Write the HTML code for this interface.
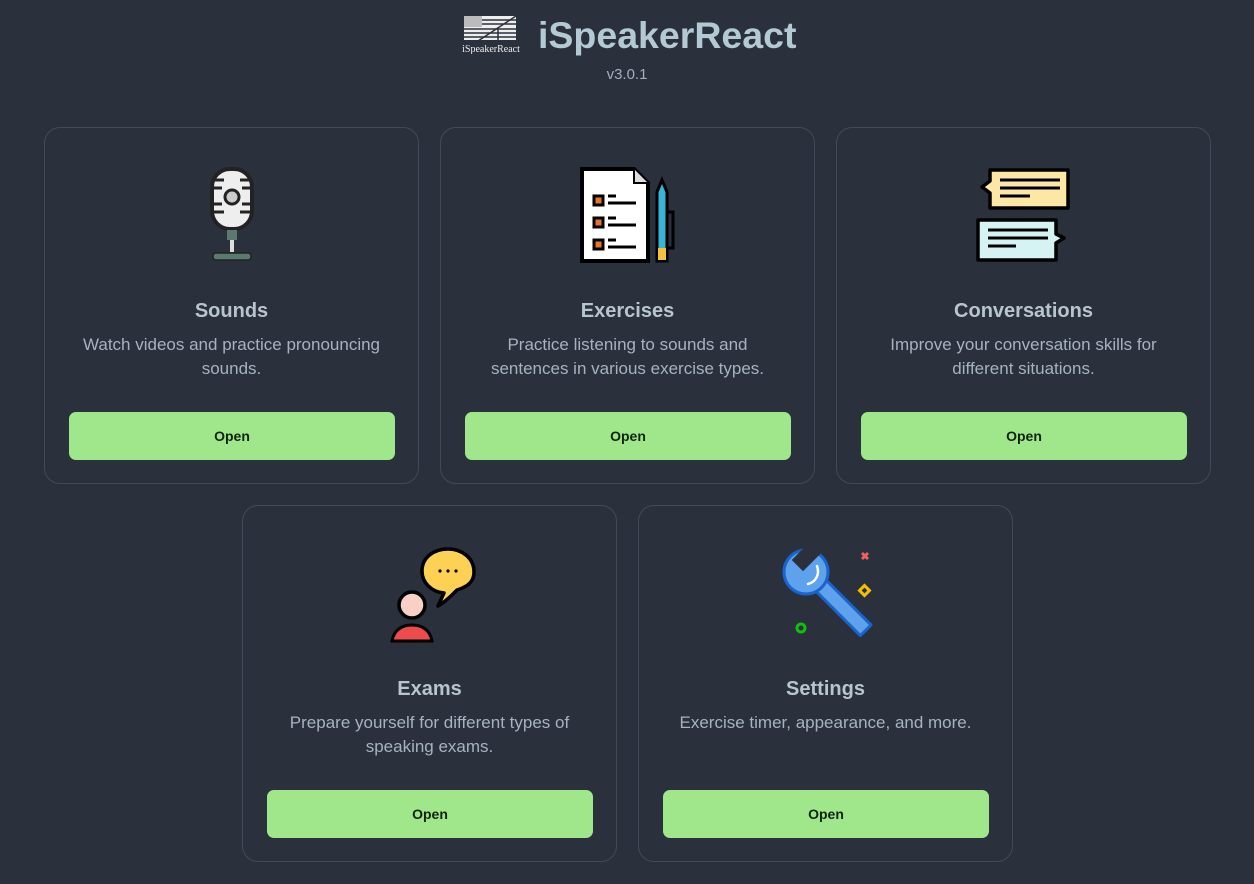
<!DOCTYPE html>
<html><head><meta charset="utf-8"><style>
*{box-sizing:border-box;margin:0;padding:0}
body{width:1254px;height:884px;background:#2a303c;font-family:"Liberation Sans","DejaVu Sans",sans-serif;color:#a6adbb;overflow:hidden;position:relative}
.logo{position:absolute;left:458px;top:14px;width:66px;height:40px}
.brand{position:absolute;left:538px;top:14px;font-size:37.5px;font-weight:bold;color:#b3c9d3}
.ver{position:absolute;left:0;width:1254px;top:66px;text-align:center;font-size:15px;color:#a6adbb}
.card{position:absolute;width:375px;height:357px;border:1px solid #434a57;border-radius:16px;text-align:center}
.card svg.ic{position:absolute;left:139px;top:38px;width:96px;height:100px}
.card h2{position:absolute;top:172px;left:0;width:100%;font-size:20px;font-weight:bold;color:#b8c5cf}
.card p{position:absolute;top:205px;left:30px;width:313px;font-size:17px;line-height:24px;color:#a6b3bf}
.btn{position:absolute;left:24px;top:284px;width:326px;height:48px;background:#a0e78c;border-radius:7px;color:#12230e;font-size:14px;font-weight:bold;line-height:48px}
</style></head><body>
<svg class="logo" viewBox="0 0 66 40">
<rect x="6" y="2" width="52" height="24" fill="#eee"/>
<rect x="6" y="2" width="18" height="11" fill="#bbb"/>
<g stroke="#2a303c" stroke-width="1.5"><line x1="24" y1="6" x2="58" y2="6"/><line x1="24" y1="10" x2="58" y2="10"/><line x1="6" y1="15" x2="58" y2="15"/><line x1="6" y1="19" x2="58" y2="19"/><line x1="6" y1="23" x2="58" y2="23"/><line x1="20" y1="27" x2="58" y2="2"/><line x1="40" y1="14" x2="40" y2="27"/></g>
<text x="33" y="38" font-family="Liberation Serif,serif" font-size="10" fill="#eee" text-anchor="middle">iSpeakerReact</text>
</svg>
<div class="brand">iSpeakerReact</div>
<div class="ver">v3.0.1</div>

<div class="card" style="left:44px;top:127px">
<svg class="ic" viewBox="0 0 96 100"><rect x="28" y="3" width="40" height="60" rx="18" fill="#eee" stroke="#222" stroke-width="4"/><g stroke="#222" stroke-width="3"><line x1="30" y1="14" x2="40" y2="14"/><line x1="56" y1="14" x2="66" y2="14"/><line x1="30" y1="22" x2="38" y2="22"/><line x1="58" y1="22" x2="66" y2="22"/><line x1="30" y1="38" x2="38" y2="38"/><line x1="58" y1="38" x2="66" y2="38"/><line x1="30" y1="46" x2="40" y2="46"/><line x1="56" y1="46" x2="66" y2="46"/></g><circle cx="48" cy="31" r="7" fill="#ccc" stroke="#222" stroke-width="3"/><rect x="43" y="64" width="10" height="10" fill="#5a7a70"/><rect x="46" y="74" width="4" height="12" fill="#ddd"/><rect x="29" y="87" width="38" height="7" rx="3" fill="#5a7a70" stroke="#222" stroke-width="1.5"/></svg>
<h2>Sounds</h2><p>Watch videos and practice pronouncing sounds.</p><div class="btn">Open</div></div>

<div class="card" style="left:440px;top:127px">
<svg class="ic" viewBox="0 0 96 100"><path d="M2 3H54L68 17V95H2Z" fill="#fff" stroke="#000" stroke-width="4"/><path d="M54 3V17H68" fill="#ddd" stroke="#000" stroke-width="2"/><g fill="#e8742a" stroke="#000" stroke-width="3"><rect x="14" y="30" width="9" height="9"/><rect x="14" y="52" width="9" height="9"/><rect x="14" y="74" width="9" height="9"/></g><g stroke="#000" stroke-width="3"><line x1="28" y1="30" x2="36" y2="30"/><line x1="28" y1="37" x2="56" y2="37"/><line x1="28" y1="52" x2="36" y2="52"/><line x1="28" y1="59" x2="56" y2="59"/><line x1="28" y1="74" x2="36" y2="74"/><line x1="28" y1="81" x2="56" y2="81"/></g><path d="M77 26L82 14L87 26V95H77Z" fill="#3ab4d6" stroke="#000" stroke-width="3"/><rect x="78" y="82" width="8" height="12" fill="#f2c23d"/><path d="M88 46H93V82H88" fill="none" stroke="#000" stroke-width="3"/></svg>
<h2>Exercises</h2><p>Practice listening to sounds and sentences in various exercise types.</p><div class="btn">Open</div></div>

<div class="card" style="left:836px;top:127px">
<svg class="ic" viewBox="0 0 96 100"><path d="M14 4H92V42H14V27L6 21L14 15Z" fill="#fde7a4" stroke="#000" stroke-width="3.5" stroke-linejoin="round"/><g stroke="#000" stroke-width="3"><line x1="24" y1="14" x2="84" y2="14"/><line x1="24" y1="22" x2="84" y2="22"/><line x1="24" y1="30" x2="54" y2="30"/></g><path d="M2 54H80V68L88 72L80 77V94H2Z" fill="#d6f3f3" stroke="#000" stroke-width="3.5" stroke-linejoin="round"/><g stroke="#000" stroke-width="3"><line x1="12" y1="64" x2="72" y2="64"/><line x1="12" y1="72" x2="72" y2="72"/><line x1="12" y1="80" x2="40" y2="80"/></g></svg>
<h2>Conversations</h2><p>Improve your conversation skills for different situations.</p><div class="btn">Open</div></div>

<div class="card" style="left:242px;top:505px">
<svg class="ic" viewBox="0 0 96 100"><path d="M75 46C88 42 92 36 92 28C92 14 80 5 66 5C51 5 40 14 40 27C40 39 50 48 62 49L56 62C63 58 69 52 75 46Z" fill="#fdd154" stroke="#000" stroke-width="3.5" stroke-linejoin="round"/><g fill="#000"><circle cx="58" cy="27" r="1.6"/><circle cx="66" cy="27" r="1.6"/><circle cx="74" cy="27" r="1.6"/></g><circle cx="30" cy="61" r="13" fill="#f9d0c4" stroke="#000" stroke-width="3.5"/><path d="M10 97C12 86 20 81 30 81C40 81 48 86 50 97Z" fill="#ee4c4c" stroke="#000" stroke-width="3"/></svg>
<h2>Exams</h2><p>Prepare yourself for different types of speaking exams.</p><div class="btn">Open</div></div>

<div class="card" style="left:638px;top:505px">
<svg class="ic" viewBox="0 0 96 100">
<rect x="23" y="59" width="70" height="15" transform="rotate(45 58 66.5) translate(0 -7)" fill="#5ea2ee" stroke="#1a64cc" stroke-width="3" stroke-linejoin="round"/>
<circle cx="28" cy="28" r="22" fill="#5ea2ee" stroke="#1a64cc" stroke-width="3"/>
<rect x="22" y="-4" width="16" height="30" transform="rotate(45 30 11)" fill="#2a303c"/>
<path d="M39 22C42 30 38 38 30 40" fill="none" stroke="#fff" stroke-width="2.5" stroke-linecap="round"/>
<path d="M84 9L90 15M90 9L84 15" stroke="#f06060" stroke-width="3"/><rect x="83" y="43" width="7" height="7" transform="rotate(45 86.5 46.5)" fill="none" stroke="#f5c000" stroke-width="3"/><circle cx="23" cy="84" r="4" fill="none" stroke="#10c010" stroke-width="3"/></svg>
<h2>Settings</h2><p>Exercise timer, appearance, and more.</p><div class="btn">Open</div></div>
</body></html>
